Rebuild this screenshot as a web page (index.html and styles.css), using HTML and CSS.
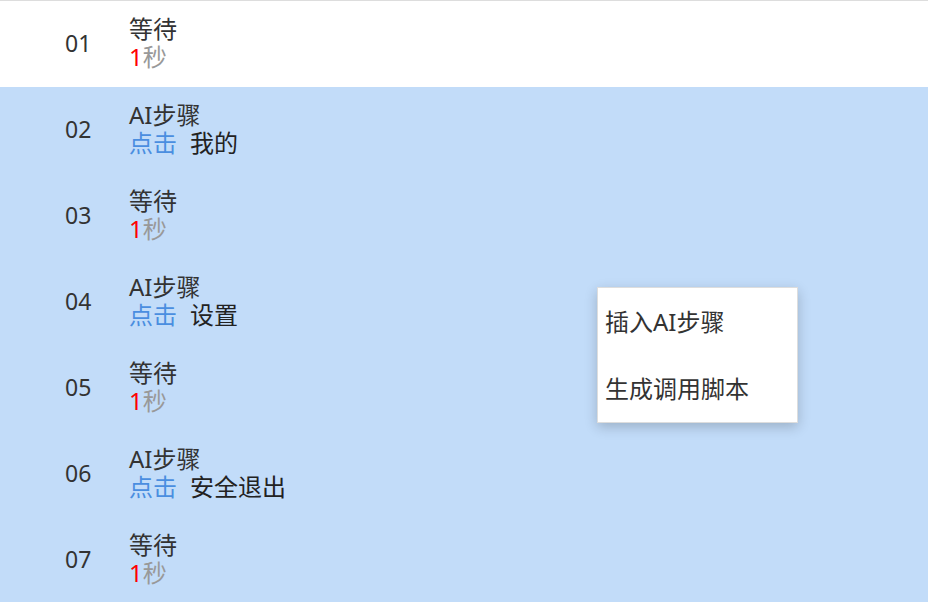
FILE: index.html
```html
<!DOCTYPE html>
<html lang="zh-CN">

<head>
    <meta charset="UTF-8">
    <title>步骤列表</title>
    <link rel="stylesheet" href="styles.css">
</head>

<body>
    <div class="step-list">
        <!-- Step rows -->
        <div class="step-row">
            <div class="step-no">01</div>
            <div class="step-body">
                <div class="step-title">等待</div>
                <div class="step-sub"><span class="num">1</span><span class="unit">秒</span></div>
            </div>
        </div>
        <div class="step-row selected">
            <div class="step-no">02</div>
            <div class="step-body">
                <div class="step-title">AI步骤</div>
                <div class="step-sub"><span class="action">点击</span><span class="target">我的</span></div>
            </div>
        </div>
        <div class="step-row selected">
            <div class="step-no">03</div>
            <div class="step-body">
                <div class="step-title">等待</div>
                <div class="step-sub"><span class="num">1</span><span class="unit">秒</span></div>
            </div>
        </div>
        <div class="step-row selected">
            <div class="step-no">04</div>
            <div class="step-body">
                <div class="step-title">AI步骤</div>
                <div class="step-sub"><span class="action">点击</span><span class="target">设置</span></div>
            </div>
        </div>
        <div class="step-row selected">
            <div class="step-no">05</div>
            <div class="step-body">
                <div class="step-title">等待</div>
                <div class="step-sub"><span class="num">1</span><span class="unit">秒</span></div>
            </div>
        </div>
        <div class="step-row selected">
            <div class="step-no">06</div>
            <div class="step-body">
                <div class="step-title">AI步骤</div>
                <div class="step-sub"><span class="action">点击</span><span class="target">安全退出</span></div>
            </div>
        </div>
        <div class="step-row selected">
            <div class="step-no">07</div>
            <div class="step-body">
                <div class="step-title">等待</div>
                <div class="step-sub"><span class="num">1</span><span class="unit">秒</span></div>
            </div>
        </div>

        <!-- Right click menu -->
        <div class="context-menu">
            <div class="menu-item">插入AI步骤</div>
            <div class="menu-item">生成调用脚本</div>
        </div>
    </div>
</body>

</html>
```

FILE: styles.css
```css
body {
    margin: 0;
    font-family: "Noto Sans", "Noto Sans CJK SC", sans-serif;
    color: #333;
    background-color: #fff;
}

/* List */
.step-list {
    position: relative;
    border-top: 1px solid #ddd;
}

.step-row {
    display: flex;
    align-items: center;
    height: 86px;
    padding-left: 65px;
}

.step-row.selected {
    background-color: #c2dcf9;
}

.step-no {
    width: 64px;
    font-size: 23px;
    line-height: 28px;
    padding-bottom: 3px;
}

.step-body {
    font-size: 24px;
    line-height: 28px;
    padding-bottom: 3px;
}

.num {
    color: #f00;
}

.unit {
    color: #999;
}

.action {
    color: #4a8ee0;
    margin-right: 13px;
}

.target {
    color: #222;
}

/* Menu */
.context-menu {
    position: absolute;
    left: 597px;
    top: 286px;
    width: 199px;
    background-color: #fff;
    border: 1px solid #ddd;
    box-shadow: 0 4px 12px rgba(0, 0, 0, 0.2);
}

.menu-item {
    height: 67px;
    line-height: 67px;
    padding-left: 7px;
    font-size: 24px;
}
```
